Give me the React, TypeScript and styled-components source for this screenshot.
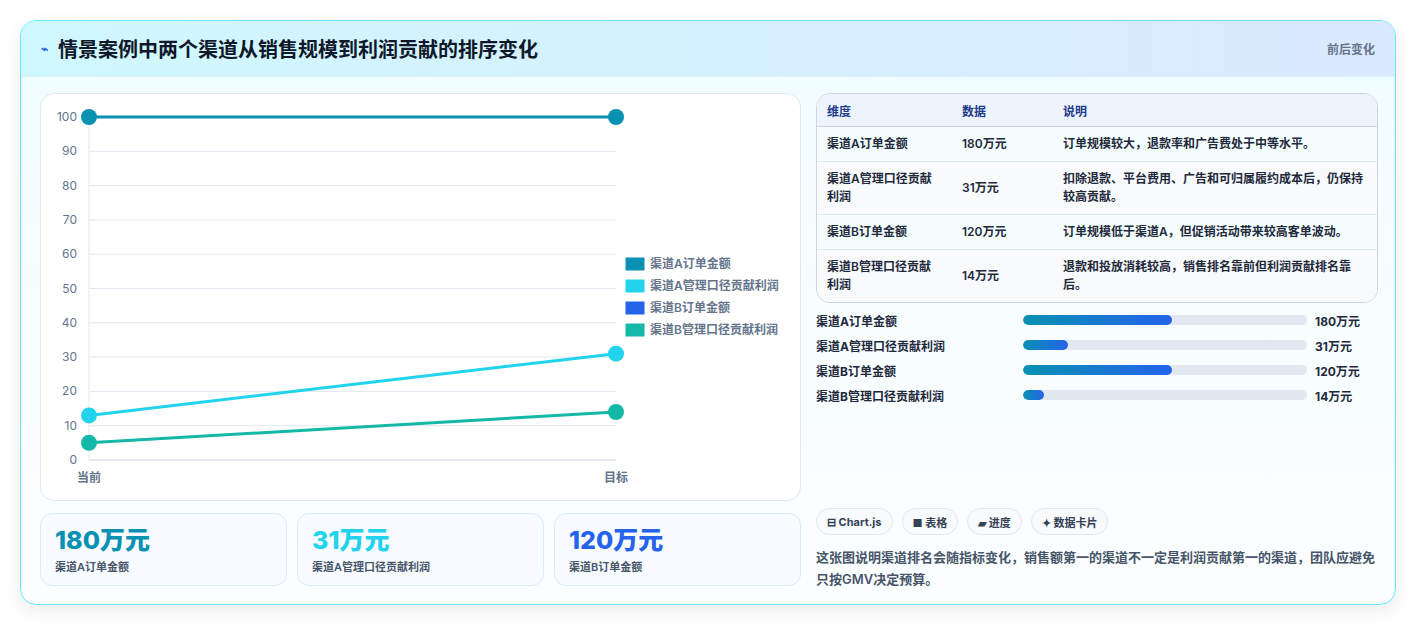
import React from "react";
import styled, { createGlobalStyle } from "styled-components";

const G = createGlobalStyle`
  body { margin:0; background:#f3f4f6; font-family: Inter, "Noto Sans CJK SC", sans-serif; }
`;
const Page = styled.div`padding:20px 21px 21px 20px; background:#fff; height:626px; box-sizing:border-box;`;
const Card = styled.div`
  border:1px solid #67e8f9; border-radius:16px; overflow:hidden; height:585px; box-sizing:border-box;
  background:linear-gradient(180deg,#effeff 0%,#f8fdff 50%,#fbfeff 100%);
  box-shadow:0 6px 18px rgba(0,0,0,0.08);
`;
const Header = styled.div`
  height:55px; display:flex; align-items:center; justify-content:space-between; padding:0 20px 0 20px;
  background:linear-gradient(90deg,#cff8fe,#dbe9fe); border-bottom:1px solid #e0f2fe;
`;
const Title = styled.h1`margin:0; font-size:20px; font-weight:700; color:#0f172a; display:flex; align-items:center; gap:10px;`;
const Icon = styled.span`color:#2563eb; font-size:12px;`;
const HeadRight = styled.span`font-size:12px; font-weight:700; color:#64748b;`;
const Body = styled.div`display:grid; grid-template-columns:761px 562px; gap:15px; padding:16px 19px 0 19px;`;
const Col = styled.div`display:flex; flex-direction:column;`;
const ChartBox = styled.div`height:408px; border:1px solid #e2e8f0; border-radius:14px; background:#fff; box-sizing:border-box;`;
const Stats = styled.div`display:grid; grid-template-columns:repeat(3,1fr); gap:10px; margin-top:12px;`;
const Stat = styled.div`height:73px; border:1px solid #dbeafe; border-radius:12px; background:#f8fbff; padding:10px 14px; box-sizing:border-box;`;
const StatV = styled.div<{ c: string }>`font-size:25px; font-weight:800; color:${p => p.c}; line-height:32px;`;
const StatL = styled.div`font-size:11px; font-weight:600; color:#475569; margin-top:2px;`;
const Table = styled.table`width:100%; border-collapse:separate; border-spacing:0; border:1px solid #cbd5e1; border-radius:14px; overflow:hidden; font-size:12px; font-weight:600; color:#1e293b;`;
const Th = styled.th`text-align:left; padding:0 10px; height:32px; background:#eef4fe; color:#1e3a8a; font-weight:700; border-bottom:1px solid #cbd5e1;`;
const Td = styled.td<{ w?: number }>`padding:8px 10px; line-height:18px; vertical-align:middle; ${p => p.w ? `width:${p.w}px;` : ""}`;
const Tr = styled.tr<{ alt: boolean }>`background:${p => p.alt ? "#f8fafc" : "#f5feff"}; & td{border-bottom:1px solid #e2e8f0;} &:last-child td{border-bottom:none;}`;
const Bars = styled.div`display:flex; flex-direction:column; gap:7px; margin-top:8px;`;
const BarRow = styled.div`display:grid; grid-template-columns:199px 284px auto; gap:8px; align-items:center; font-size:12px; font-weight:700; color:#1e293b; height:18px;`;
const Track = styled.div`height:10px; border-radius:5px; background:#e2e8f0; overflow:hidden;`;
const Fill = styled.div`height:100%; border-radius:5px; background:linear-gradient(90deg,#0891b2,#2563eb);`;
const Chips = styled.div`display:flex; gap:9px; margin-top:104px;`;
const Chip = styled.span`height:27px; padding:0 10px; border:1px solid #e2e8f0; border-radius:14px; background:#f8fafc; font-size:11px; font-weight:700; color:#334155; display:flex; align-items:center; gap:4px; box-sizing:border-box;`;
const Para = styled.p`margin:11px 0 0; font-size:13px; font-weight:600; color:#475569; line-height:22px;`;

const y = (v: number) => 23 + (100 - v) * 3.43;
const X0 = 48, X1 = 575;
const series = [
  { c: "#0891b2", a: 100, b: 100, n: "渠道A订单金额" },
  { c: "#22d3ee", a: 13, b: 31, n: "渠道A管理口径贡献利润" },
  { c: "#2563eb", a: null, b: null, n: "渠道B订单金额" },
  { c: "#14b8a6", a: 5, b: 14, n: "渠道B管理口径贡献利润" },
];

function Chart() {
  return (
    <svg width="759" height="406" style={{ display: "block" }}>
      {[0, 10, 20, 30, 40, 50, 60, 70, 80, 90, 100].map(v => (
        <g key={v}>
          <line x1={X0} x2={X1} y1={y(v)} y2={y(v)} stroke={v === 0 ? "#cbd5e1" : "#e2e8f0"} />
          <text x={36} y={y(v) + 4} textAnchor="end" fontSize="12" fill="#64748b" fontFamily="Inter">{v}</text>
        </g>
      ))}
      <line x1={X0} x2={X0} y1={y(100)} y2={y(0)} stroke="#e2e8f0" />
      <text x={X0} y={388} textAnchor="middle" fontSize="12" fontWeight="600" fill="#64748b">当前</text>
      <text x={X1} y={388} textAnchor="middle" fontSize="12" fontWeight="600" fill="#64748b">目标</text>
      {series.filter(s => s.a !== null).map(s => (
        <g key={s.n}>
          <line x1={X0} x2={X1} y1={y(s.a!)} y2={y(s.b!)} stroke={s.c} strokeWidth="3" />
          <circle cx={X0} cy={y(s.a!)} r="8" fill={s.c} />
          <circle cx={X1} cy={y(s.b!)} r="8" fill={s.c} />
        </g>
      ))}
      {series.map((s, i) => (
        <g key={i}>
          <rect x={584} y={163 + i * 22} width={20} height={14} fill={s.c} stroke="#fff" />
          <text x={609} y={174 + i * 22} fontSize="12" fontWeight="600" fill="#64748b">{s.n}</text>
        </g>
      ))}
    </svg>
  );
}

const rows = [
  ["渠道A订单金额", "180万元", "订单规模较大，退款率和广告费处于中等水平。"],
  ["渠道A管理口径贡献利润", "31万元", "扣除退款、平台费用、广告和可归属履约成本后，仍保持较高贡献。"],
  ["渠道B订单金额", "120万元", "订单规模低于渠道A，但促销活动带来较高客单波动。"],
  ["渠道B管理口径贡献利润", "14万元", "退款和投放消耗较高，销售排名靠前但利润贡献排名靠后。"],
];
const bars = [["渠道A订单金额", 52.5, "180万元"], ["渠道A管理口径贡献利润", 16, "31万元"], ["渠道B订单金额", 52.5, "120万元"], ["渠道B管理口径贡献利润", 7.5, "14万元"]] as const;

export default function App() {
  return (
    <Page>
      <G />
      <Card>
        <Header>
          <Title><Icon>⌁</Icon>情景案例中两个渠道从销售规模到利润贡献的排序变化</Title>
          <HeadRight>前后变化</HeadRight>
        </Header>
        <Body>
          <Col>
            <ChartBox><Chart /></ChartBox>
            <Stats>
              <Stat><StatV c="#0891b2">180万元</StatV><StatL>渠道A订单金额</StatL></Stat>
              <Stat><StatV c="#22d3ee">31万元</StatV><StatL>渠道A管理口径贡献利润</StatL></Stat>
              <Stat><StatV c="#2563eb">120万元</StatV><StatL>渠道B订单金额</StatL></Stat>
            </Stats>
          </Col>
          <Col>
            <Table>
              <thead><tr><Th>维度</Th><Th>数据</Th><Th>说明</Th></tr></thead>
              <tbody>
                {rows.map((r, i) => (
                  <Tr key={i} alt={i % 2 === 1}>
                    <Td w={115}>{r[0]}</Td><Td w={81}>{r[1]}</Td><Td>{r[2]}</Td>
                  </Tr>
                ))}
              </tbody>
            </Table>
            <Bars>
              {bars.map((b, i) => (
                <BarRow key={i}>
                  <span>{b[0]}</span>
                  <Track><Fill style={{ width: `${b[1]}%` }} /></Track>
                  <span>{b[2]}</span>
                </BarRow>
              ))}
            </Bars>
            <Chips>
              <Chip>⊟ Chart.js</Chip><Chip>■ 表格</Chip><Chip>▰ 进度</Chip><Chip>✦ 数据卡片</Chip>
            </Chips>
            <Para>这张图说明渠道排名会随指标变化，销售额第一的渠道不一定是利润贡献第一的渠道，团队应避免只按GMV决定预算。</Para>
          </Col>
        </Body>
      </Card>
    </Page>
  );
}
